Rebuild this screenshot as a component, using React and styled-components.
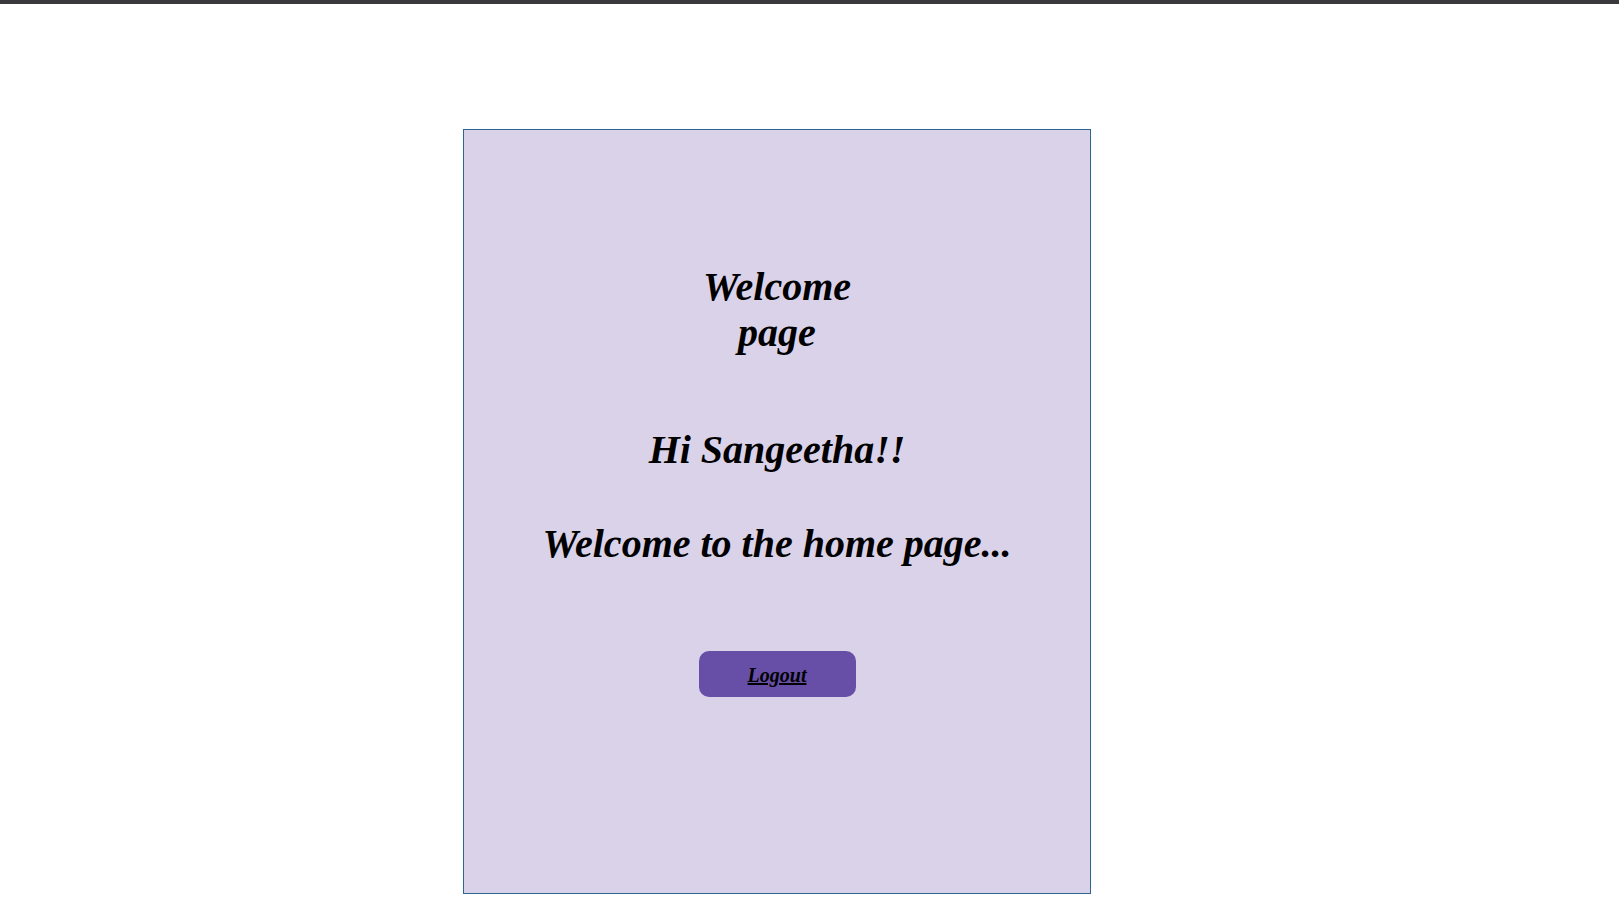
import styled, { createGlobalStyle } from 'styled-components';

const GlobalStyle = createGlobalStyle`
  html, body {
    margin: 0;
    padding: 0;
    background: #ffffff;
  }
  body {
    font-family: "Liberation Serif", "Times New Roman", serif;
  }
`;

const TopBar = styled.div`
  height: 4px;
  background: #3a3a3c;
`;

const Page = styled.div`
  padding: 125px 0 0 463px;
`;

const Card = styled.div`
  box-sizing: border-box;
  width: 628px;
  height: 765px;
  background: #d9d2e9;
  border: 1px solid #2b6791;
  display: flex;
  flex-direction: column;
  align-items: center;
  padding-top: 134px;
`;

const Heading = styled.h1`
  margin: 0;
  width: 200px;
  text-align: center;
  font-size: 40px;
  font-weight: bold;
  font-style: italic;
  line-height: 46px;
  color: #000;
`;

const Line = styled.h2`
  margin: ${(p) => p.$top}px 0 0;
  text-align: center;
  font-size: 40px;
  font-weight: bold;
  font-style: italic;
  line-height: 46px;
  color: #000;
`;

const LogoutButton = styled.button`
  margin-top: 84px;
  width: 157px;
  height: 46px;
  border: none;
  border-radius: 10px;
  background: #674ea7;
  font-family: "Liberation Serif", "Times New Roman", serif;
  font-size: 20px;
  font-weight: bold;
  font-style: italic;
  text-decoration: underline;
  color: #000;
  cursor: pointer;
  padding: 2px 0 0;
`;

export default function App() {
  return (
    <>
      <GlobalStyle />
      <TopBar />
      <Page>
        <Card>
          <Heading>Welcome page</Heading>
          <Line $top={71}>Hi Sangeetha!!</Line>
          <Line $top={48}>Welcome to the home page...</Line>
          <LogoutButton>Logout</LogoutButton>
        </Card>
      </Page>
    </>
  );
}
